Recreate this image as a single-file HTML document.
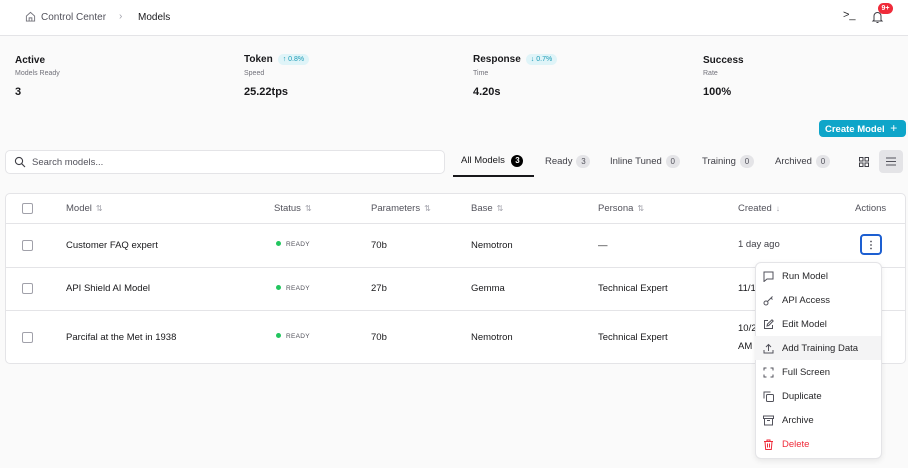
<!DOCTYPE html><html><head><style>
*{box-sizing:border-box;margin:0;padding:0}
body{width:908px;height:468px;background:#fafafa;font-family:"Liberation Sans",sans-serif;color:#18181b;position:relative;overflow:hidden;font-size:10px}
.a{position:absolute;white-space:nowrap}
.hdr{position:absolute;left:0;top:0;width:908px;height:36px;background:#fff;border-bottom:1px solid #e4e4e7}
.t{font-weight:bold;font-size:10px}
.s{font-size:7px;color:#71717a}
.v{font-weight:bold;font-size:11px}
.pill{display:inline-block;background:#dff4f8;color:#1b9ab5;font-size:7px;padding:2px 5px;border-radius:8px;margin-left:5px;font-weight:normal;vertical-align:1px}
.cnt{display:inline-block;background:#e4e4e7;color:#52525b;font-size:8px;border-radius:7px;width:14px;height:13px;text-align:center;line-height:13px;margin-left:4px}
.cb{position:absolute;left:22px;width:11px;height:11px;border:1px solid #a1a1aa;border-radius:2px;background:#fff}
.th{color:#52525b;font-size:9.5px}
.th i{font-style:normal;color:#a1a1aa;font-size:8px;margin-left:4px}
.line{position:absolute;left:5px;width:901px;height:1px;background:#e4e4e7}
.rd{font-size:6.5px;color:#52525b;letter-spacing:.3px}
.rd b{display:inline-block;width:5px;height:5px;border-radius:50%;background:#22c55e;margin-right:5px;vertical-align:0}
.mi{position:absolute;left:755px;width:126px;height:24px;font-size:9.5px;color:#27272a}
.mi span{position:absolute;left:27px;top:7px}
.mi svg{position:absolute;left:8px;top:7px}
</style></head><body>
<div class="hdr"></div>
<svg class="a" style="left:25px;top:11px" width="11" height="11" viewBox="0 0 12 12" fill="none" stroke="#71717a" stroke-width="1"><path d="M1.5 5.5L6 1.5l4.5 4V11h-9z M4.5 11V7.5h3V11"/></svg>
<div class="a" style="left:41px;top:12px;font-size:10px;color:#52525b">Control Center</div>
<div class="a" style="left:119px;top:11px;font-size:10px;color:#a1a1aa">›</div>
<div class="a" style="left:138px;top:12px;font-size:10px;color:#18181b">Models</div>
<div class="a" style="left:843px;top:9px;font-size:11px;color:#27272a">&gt;_</div>
<svg class="a" style="left:871px;top:10px" width="13" height="14" viewBox="0 0 13 14" fill="none" stroke="#3f3f46" stroke-width="1"><path d="M3 10V6a3.5 3.5 0 017 0v4l1 1H2z M5.5 12.5h2"/></svg>
<div class="a" style="left:878px;top:3px;width:15px;height:11px;background:#ef2b3a;border-radius:6px;color:#fff;font-size:7px;font-weight:bold;text-align:center;line-height:11px">9+</div>

<div class="a t" style="left:15px;top:55px">Active</div><div class="a s" style="left:15px;top:70px">Models Ready</div><div class="a v" style="left:15px;top:86px">3</div>
<div class="a t" style="left:244px;top:54px">Token<span class="pill">↑ 0.8%</span></div><div class="a s" style="left:244px;top:70px">Speed</div><div class="a v" style="left:244px;top:86px">25.22tps</div>
<div class="a t" style="left:473px;top:54px">Response<span class="pill">↓ 0.7%</span></div><div class="a s" style="left:473px;top:70px">Time</div><div class="a v" style="left:473px;top:86px">4.20s</div>
<div class="a t" style="left:703px;top:55px">Success</div><div class="a s" style="left:703px;top:70px">Rate</div><div class="a v" style="left:703px;top:86px">100%</div>

<div class="a" style="left:819px;top:120px;width:87px;height:17px;background:#0ea5c9;border-radius:4px;color:#fff;font-size:9.5px;font-weight:bold;line-height:17px;padding-left:6px">Create Model <span style="font-weight:normal;font-size:12px;margin-left:3px">+</span></div>

<div class="a" style="left:5px;top:150px;width:440px;height:24px;background:#fff;border:1px solid #e4e4e7;border-radius:5px"></div>
<svg class="a" style="left:14px;top:156px" width="12" height="12" viewBox="0 0 12 12" fill="none" stroke="#3f3f46" stroke-width="1.1"><circle cx="5" cy="5" r="3.6"/><path d="M7.7 7.7L11 11"/></svg>
<div class="a" style="left:32px;top:157px;font-size:9.5px;color:#52525b">Search models...</div>

<div class="a" style="left:461px;top:155px;font-size:9.5px">All Models <span class="cnt" style="background:#000;color:#fff;border-radius:50%;width:12px;height:12px;line-height:12px;font-weight:bold">3</span></div>
<div class="a" style="left:453px;top:175px;width:81px;height:1.5px;background:#18181b"></div>
<div class="a" style="left:545px;top:155px;font-size:9.5px;color:#3f3f46">Ready<span class="cnt">3</span></div>
<div class="a" style="left:610px;top:155px;font-size:9.5px;color:#3f3f46">Inline Tuned<span class="cnt">0</span></div>
<div class="a" style="left:702px;top:155px;font-size:9.5px;color:#3f3f46">Training<span class="cnt">0</span></div>
<div class="a" style="left:775px;top:155px;font-size:9.5px;color:#3f3f46">Archived<span class="cnt">0</span></div>
<svg class="a" style="left:859px;top:157px" width="10" height="10" viewBox="0 0 10 10" fill="none" stroke="#3f3f46" stroke-width="1"><rect x=".5" y=".5" width="3.5" height="3.5"/><rect x="6" y=".5" width="3.5" height="3.5"/><rect x=".5" y="6" width="3.5" height="3.5"/><rect x="6" y="6" width="3.5" height="3.5"/></svg>
<div class="a" style="left:879px;top:150px;width:24px;height:23px;background:#e4e4e7;border-radius:4px"></div>
<svg class="a" style="left:886px;top:157px" width="10" height="9" viewBox="0 0 10 9" stroke="#52525b" stroke-width="1"><path d="M0 1h10M0 4.5h10M0 8h10"/></svg>

<div class="a" style="left:5px;top:193px;width:901px;height:171px;background:#fff;border:1px solid #e4e4e7;border-radius:5px"></div>
<div class="cb" style="top:203px"></div>
<div class="a th" style="left:66px;top:203px">Model<i>⇅</i></div>
<div class="a th" style="left:274px;top:203px">Status<i>⇅</i></div>
<div class="a th" style="left:371px;top:203px">Parameters<i>⇅</i></div>
<div class="a th" style="left:471px;top:203px">Base<i>⇅</i></div>
<div class="a th" style="left:598px;top:203px">Persona<i>⇅</i></div>
<div class="a th" style="left:738px;top:203px">Created<i>↓</i></div>
<div class="a th" style="left:855px;top:203px">Actions</div>
<div class="line" style="top:223px"></div>
<div class="cb" style="top:240px"></div>
<div class="a" style="left:66px;top:240px;font-size:9.5px">Customer FAQ expert</div>
<div class="a rd" style="left:276px;top:241px"><b></b>READY</div>
<div class="a" style="left:371px;top:240px;font-size:9.5px">70b</div>
<div class="a" style="left:471px;top:240px;font-size:9.5px">Nemotron</div>
<div class="a" style="left:598px;top:240px;font-size:9.5px">—</div>
<div class="a" style="left:738px;top:239px;font-size:9.5px;color:#3f3f46">1 day ago</div>
<div class="a" style="left:860px;top:234px;width:22px;height:21px;border:2px solid #1d5fd1;border-radius:4px;background:#fff"></div>
<svg class="a" style="left:869px;top:240px" width="4" height="10" viewBox="0 0 4 10" fill="#52525b"><circle cx="2" cy="1.5" r=".9"/><circle cx="2" cy="5" r=".9"/><circle cx="2" cy="8.5" r=".9"/></svg>
<div class="line" style="top:267px"></div>
<div class="cb" style="top:283px"></div>
<div class="a" style="left:66px;top:283px;font-size:9.5px">API Shield AI Model</div>
<div class="a rd" style="left:276px;top:285px"><b></b>READY</div>
<div class="a" style="left:371px;top:283px;font-size:9.5px">27b</div>
<div class="a" style="left:471px;top:283px;font-size:9.5px">Gemma</div>
<div class="a" style="left:598px;top:283px;font-size:9.5px">Technical Expert</div>
<div class="a" style="left:738px;top:283px;font-size:9.5px">11/1</div>
<div class="line" style="top:310px"></div>
<div class="cb" style="top:332px"></div>
<div class="a" style="left:66px;top:332px;font-size:9.5px">Parcifal at the Met in 1938</div>
<div class="a rd" style="left:276px;top:333px"><b></b>READY</div>
<div class="a" style="left:371px;top:332px;font-size:9.5px">70b</div>
<div class="a" style="left:471px;top:332px;font-size:9.5px">Nemotron</div>
<div class="a" style="left:598px;top:332px;font-size:9.5px">Technical Expert</div>
<div class="a" style="left:738px;top:323px;font-size:9.5px">10/2</div>
<div class="a" style="left:738px;top:341px;font-size:9.5px">AM</div>

<div class="a" style="left:755px;top:262px;width:127px;height:197px;background:#fff;border:1px solid #e4e4e7;border-radius:6px;box-shadow:0 2px 6px rgba(0,0,0,.08)"></div>
<div class="mi" style="top:264px"><svg width="11" height="11" viewBox="0 0 11 11" fill="none" stroke="#52525b"><path d="M1 1h9v7H4l-3 2.5z"/></svg><span>Run Model</span></div>
<div class="mi" style="top:288px"><svg width="11" height="11" viewBox="0 0 11 11" fill="none" stroke="#52525b"><circle cx="3" cy="8" r="2"/><path d="M4.5 6.5L9.5 1.5M8 3l1.5 1.5"/></svg><span>API Access</span></div>
<div class="mi" style="top:312px"><svg width="11" height="11" viewBox="0 0 11 11" fill="none" stroke="#52525b"><path d="M5 1.5H1.5v8h8V6M4 7l.5-2L9 .8 10.2 2 5.7 6.5z"/></svg><span>Edit Model</span></div>
<div class="mi" style="top:336px;background:#f4f4f5"><svg width="11" height="11" viewBox="0 0 11 11" fill="none" stroke="#52525b"><path d="M1 7v3h9V7M5.5 8V1.5M3 4l2.5-2.5L8 4"/></svg><span>Add Training Data</span></div>
<div class="mi" style="top:360px"><svg width="11" height="11" viewBox="0 0 11 11" fill="none" stroke="#52525b"><path d="M1 3.5V1h2.5M7.5 1H10v2.5M10 7.5V10H7.5M3.5 10H1V7.5"/></svg><span>Full Screen</span></div>
<div class="mi" style="top:384px"><svg width="11" height="11" viewBox="0 0 11 11" fill="none" stroke="#52525b"><rect x="3.5" y="3.5" width="7" height="7" rx="1"/><path d="M1 7.5V1h6.5"/></svg><span>Duplicate</span></div>
<div class="mi" style="top:408px"><svg width="11" height="11" viewBox="0 0 11 11" fill="none" stroke="#52525b"><path d="M.5 1h10v2.5H.5zM1.5 3.5V10h8V3.5M4 5.5h3"/></svg><span>Archive</span></div>
<div class="mi" style="top:432px;color:#ef2b3a"><svg width="11" height="11" viewBox="0 0 11 11" fill="none" stroke="#ef2b3a"><path d="M1 2.5h9M4 2.5V1h3v1.5M2 2.5l.7 8h5.6l.7-8M4.5 4.5v4M6.5 4.5v4"/></svg><span>Delete</span></div>
</body></html>
